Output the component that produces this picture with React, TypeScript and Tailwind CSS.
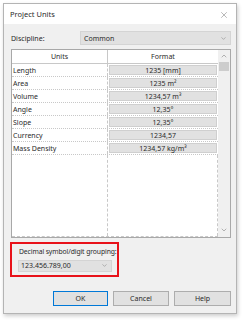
import { ChevronDown, ChevronUp, X } from 'lucide-react';

const rows = [
  { name: 'Length', format: '1235 [mm]' },
  { name: 'Area', format: '1235 m²' },
  { name: 'Volume', format: '1234,57 m³' },
  { name: 'Angle', format: '12,35°' },
  { name: 'Slope', format: '12,35°' },
  { name: 'Currency', format: '1234,57' },
  { name: 'Mass Density', format: '1234,57 kg/m³' },
];

const App = () => {
  return (
    <div
      className="w-[242px] h-[320px] bg-white pt-[3px] pl-[3px] text-[#2a2a2a]"
      style={{ fontFamily: '"Noto Sans", "Open Sans", sans-serif' }}
    >
      <div className="w-[234px] h-[311px] border border-[#b4b4b4] shadow-[1px_2px_4px_rgba(0,0,0,0.2)] flex flex-col">
        {/* title bar */}
        <div className="h-[20px] bg-white flex items-center justify-between pl-[6px] pr-[7px] pt-[1px]">
          <span className="text-[7.5px] leading-none">Project Units</span>
          <X size={10} strokeWidth={1.1} className="text-[#666]" />
        </div>

        {/* body */}
        <div className="flex-1 bg-[#f0f0f0] pl-[6px] pr-[5px] pt-[7px] flex flex-col">
          <div className="flex items-center h-[14px]">
            <span className="w-[70px] pl-[1px] text-[7px] leading-none">Discipline:</span>
            <div className="flex-1 h-[14px] bg-[#e1e1e1] border border-[#d4d4d4] flex items-center justify-between pl-[3px] pr-[3px]">
              <span className="text-[7px] leading-none">Common</span>
              <ChevronDown size={7} strokeWidth={1.4} className="text-[#666]" />
            </div>
          </div>

          {/* table */}
          <div className="ml-[1px] mt-[4px] h-[189px] border border-[#a8a8a8] bg-white flex">
            <div className="w-[206px] flex flex-col">
              <div className="h-[14px] flex border-b border-[#c8c8c8] text-[7px] leading-none">
                <div className="w-[96px] border-r border-[#c8c8c8] flex items-center justify-center">Units</div>
                <div className="flex-1 flex items-center justify-center">Format</div>
              </div>
              {rows.map((r) => (
                <div key={r.name} className="h-[13px] flex border-b border-dotted border-[#c8c8c8] text-[7px] leading-none">
                  <div className="w-[96px] border-r border-dashed border-[#c8c8c8] flex items-center pl-[1px]">{r.name}</div>
                  <div className="flex-1 p-[1px]">
                    <div className="h-full bg-[#e1e1e1] border border-[#cfcfcf] flex items-center justify-center">{r.format}</div>
                  </div>
                </div>
              ))}
              <div className="flex-1 flex border-b border-dashed border-[#c8c8c8]">
                <div className="w-[96px] border-r border-dashed border-[#c8c8c8]" />
                <div className="flex-1 border-r border-dashed border-[#c8c8c8]" />
              </div>
            </div>
            {/* scrollbar */}
            <div className="flex-1 bg-[#f0f0f0] flex flex-col items-center pt-[2px] pb-[3px]">
              <ChevronUp size={8} strokeWidth={1.4} className="text-[#666]" />
              <div className="w-[10px] h-[9px] bg-[#cdcdcd] mt-[2px]" />
              <div className="flex-1" />
              <ChevronDown size={8} strokeWidth={1.4} className="text-[#666]" />
            </div>
          </div>

          {/* decimal symbol */}
          <div className="mt-[4px] w-[109px] h-[35px] border-2 border-[#e8121a] pl-[6px] pt-[5px] flex flex-col">
            <span className="text-[6.8px] leading-none pl-[1px] whitespace-nowrap tracking-[-0.1px]">Decimal symbol/digit grouping:</span>
            <div className="mt-[4px] w-[94px] h-[12px] bg-[#e1e1e1] border border-[#d4d4d4] flex items-center justify-between pl-[2px] pr-[3px]">
              <span className="text-[7px] leading-none">123.456.789,00</span>
              <ChevronDown size={7} strokeWidth={1.4} className="text-[#666]" />
            </div>
          </div>

          {/* buttons */}
          <div className="mt-[14px] flex justify-end gap-[5px] text-[7px] leading-none">
            <div className="w-[55px] h-[15px] bg-[#e1e1e1] border border-[#0078d7] flex items-center justify-center">OK</div>
            <div className="w-[56px] h-[15px] bg-[#e1e1e1] border border-[#adadad] flex items-center justify-center">Cancel</div>
            <div className="w-[57px] h-[15px] bg-[#e1e1e1] border border-[#adadad] flex items-center justify-center">Help</div>
          </div>
        </div>
      </div>
    </div>
  );
};

export default App;
